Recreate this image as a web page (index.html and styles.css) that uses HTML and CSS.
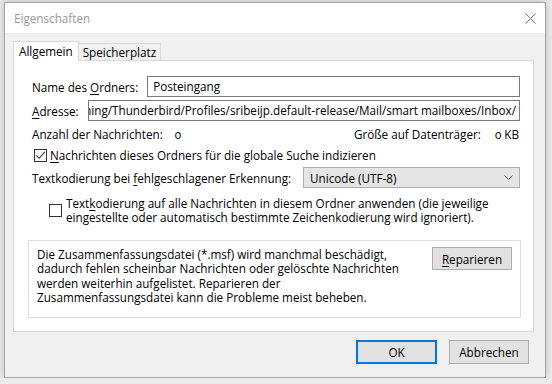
FILE: index.html
```html
<!DOCTYPE html>
<html lang="de">
<head>
	<meta charset="utf-8">
	<title>Eigenschaften</title>
	<link rel="stylesheet" href="styles.css">
</head>
<body>
	<div class="window">
		<div class="titlebar">
			<span class="title">Eigenschaften</span>
			<svg class="close" width="11" height="11" viewBox="0 0 11 11">
				<path d="M0.5 0.5 L10.5 10.5 M10.5 0.5 L0.5 10.5" stroke="#7a7a7a" stroke-width="1" fill="none"/>
			</svg>
		</div>
		<div class="content">
			<div class="tabs">
				<div class="tab active">Allgemein</div>
				<div class="tab">Speicherplatz</div>
			</div>
			<div class="panel">
				<div class="row">
					<span class="label">Name des <u>O</u>rdners:</span>
					<div class="field">Posteingang</div>
				</div>
				<div class="row">
					<span class="label"><u>A</u>dresse:</span>
					<div class="field path"><span>mailbox:///C:/Users/user/AppData/Roaming/Thunderbird/Profiles/sribeijp.default-release/Mail/smart mailboxes/Inbox/</span></div>
				</div>
				<div class="row stats">
					<span>Anzahl der Nachrichten:</span>
					<span class="num count">0</span>
					<span class="grow"></span>
					<span>Größe auf Datenträger:</span>
					<span class="num size">0 KB</span>
				</div>
				<div class="row check">
					<span class="box">
						<svg width="11" height="11" viewBox="0 0 11 11"><path d="M1.5 5.5 L4.2 8.3 L9.8 1.8" stroke="#333" stroke-width="1.1" fill="none"/></svg>
					</span>
					<span><u>N</u>achrichten dieses Ordners für die globale Suche indizieren</span>
				</div>
				<div class="row enc">
					<span class="label">Textkodierung bei <u>f</u>ehlgeschlagener Erkennung:</span>
					<div class="select">
						<span>Unicode (UTF-8)</span>
						<svg width="9" height="5" viewBox="0 0 9 5"><path d="M0.5 0.5 L4.5 4.5 L8.5 0.5" stroke="#555" stroke-width="1" fill="none"/></svg>
					</div>
				</div>
				<div class="row sub">
					<span class="box"></span>
					<span>Text<u>k</u>odierung auf alle Nachrichten in diesem Ordner anwenden (die jeweilige<br>eingestellte oder automatisch bestimmte Zeichenkodierung wird ignoriert).</span>
				</div>
				<div class="repair">
					<p>Die Zusammenfassungsdatei (*.msf) wird manchmal beschädigt,<br>dadurch fehlen scheinbar Nachrichten oder gelöschte Nachrichten<br>werden weiterhin aufgelistet. Reparieren der<br>Zusammenfassungsdatei kann die Probleme meist beheben.</p>
					<button class="btn repair-btn"><u>R</u>eparieren</button>
				</div>
			</div>
			<div class="actions">
				<button class="btn default">OK</button>
				<button class="btn">Abbrechen</button>
			</div>
		</div>
	</div>
</body>
</html>
```

FILE: styles.css
```css
*{
	box-sizing: border-box;
}
body{
	margin: 0;
	padding: 0;
	background: #ebebeb;
	font: 11.7px/16px "Open Sans", "Noto Sans", sans-serif;
	color: #000;
}
u{
	text-decoration: underline;
	text-underline-offset: 1.5px;
}
.window{
	width: 542px;
	height: 376px;
	margin: 2px 0 0 4px;
	border: 1px solid #a6a6a6;
	background: #f0f0f0;
	box-shadow: 0 0 7px rgba(0,0,0,0.22);
	display: flex;
	flex-direction: column;
}
.titlebar{
	height: 30px;
	flex: none;
	background: #fff;
	display: flex;
	align-items: center;
	padding: 0 9px 0 9px;
}
.title{
	color: #999;
	flex: 1;
}
.content{
	flex: 1;
	padding: 8px 11px 0 8px;
	display: flex;
	flex-direction: column;
}
.tabs{
	display: flex;
	align-items: flex-end;
	height: 19px;
	flex: none;
	position: relative;
	z-index: 1;
}
.tab{
	border: 1px solid #d9d9d9;
	border-bottom: none;
	padding: 0 4px;
	height: 17px;
	line-height: 16px;
	background: #f0f0f0;
}
.tab.active{
	background: #fff;
	height: 20px;
	line-height: 19px;
	margin-bottom: -1px;
	padding: 0 5px;
}
.tab + .tab{
	border-left: none;
}
.panel{
	height: 272px;
	flex: none;
	background: #fff;
	border: 1px solid #d9d9d9;
	padding: 15px 13px 0 14px;
}
.row{
	display: flex;
	align-items: center;
	margin-left: 4px;
}
.row + .row{
	margin-top: 3px;
}
.label{
	margin-right: 9px;
	white-space: nowrap;
}
.field{
	flex: 1;
	height: 21px;
	line-height: 19px;
	border: 1px solid #7a7a7a;
	padding: 0 5px;
	overflow: hidden;
	white-space: nowrap;
}
.field.path{
	display: flex;
	justify-content: flex-end;
	padding: 0 3px;
}
.num{
	font-variant-numeric: oldstyle-nums;
}
.row.stats{
	height: 16px;
	margin-top: 5px;
}
.count{
	margin-left: 12px;
}
.grow{
	flex: 1;
}
.size{
	margin-left: 14px;
	margin-right: 1px;
}
.row.check{
	margin-top: 5px;
	height: 16px;
}
.box{
	width: 13px;
	height: 13px;
	border: 1px solid #333;
	margin: 0 3px 0 2px;
	flex: none;
	display: flex;
	align-items: center;
	justify-content: center;
}
.row.enc{
	margin-top: 4px;
}
.select{
	margin-left: auto;
	width: 217px;
	height: 21px;
	border: 1px solid #adadad;
	background: #e5e5e5;
	display: flex;
	align-items: center;
	justify-content: space-between;
	padding: 0 6px 0 6px;
}
.row.sub{
	margin-left: 21px;
	margin-top: 8px;
	line-height: 14px;
}
.sub .box{
	margin: 0 4px 0 0;
}
.repair{
	margin-top: 16px;
	margin-right: -1px;
	border: 1px solid #dcdcdc;
	height: 78px;
	display: flex;
	align-items: flex-start;
	padding: 0 8px 0 8px;
}
.repair p{
	margin: 6px 0 0 0;
	line-height: 14.4px;
	flex: 1;
	white-space: nowrap;
}
.btn{
	font: inherit;
	color: #000;
	background: #e1e1e1;
	border: 1px solid #adadad;
	padding: 0;
	width: 80px;
	height: 24px;
}
.repair-btn{
	margin-top: 6px;
	height: 23px;
}
.actions{
	display: flex;
	justify-content: flex-end;
	gap: 12px;
	padding: 8px 5px 0 0;
}
.btn.default{
	width: 81px;
	border: 2px solid #0078d7;
}
```
